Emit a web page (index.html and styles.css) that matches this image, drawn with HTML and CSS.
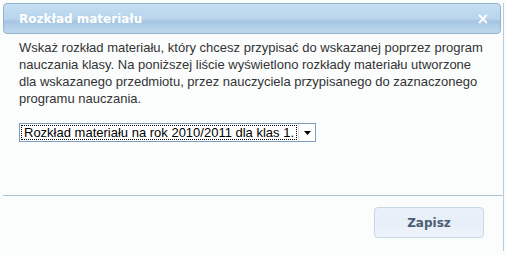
FILE: index.html
```html
<!DOCTYPE html>
<html>
<head>
<meta charset="utf-8">
<link rel="stylesheet" href="styles.css">
</head>
<body>
<div class="dialog">
  <div class="titlebar">
    <span class="title">Rozkład materiału</span>
    <span class="close">×</span>
  </div>
  <div class="content">
    <p class="desc">Wskaż rozkład materiału, który chcesz przypisać do wskazanej poprzez program nauczania klasy. Na poniższej liście wyświetlono rozkłady materiału utworzone dla wskazanego przedmiotu, przez nauczyciela przypisanego do zaznaczonego programu nauczania.</p>
    <div class="select">
      <span class="select-text">Rozkład materiału na rok 2010/2011 dla klas 1.</span>
      <span class="select-arrow"><svg width="7" height="4" viewBox="0 0 7 4"><path d="M0 0H7L3.5 4Z" fill="#000"/></svg></span>
    </div>
  </div>
  <div class="footer">
    <button class="btn">Zapisz</button>
  </div>
</div>
</body>
</html>
```

FILE: styles.css
```css
html, body {
  margin: 0;
  padding: 0;
  background: #fbfdfd;
}
.dialog {
  width: 503px;
  height: 248px;
  margin: 3px 0 0 1px;
  display: flex;
  flex-direction: column;
  border-right: 1px solid #b5cfe0;
  box-sizing: border-box;
}
.titlebar {
  height: 31px;
  margin: 0 2px 0 2px;
  border: 1px solid #93b4cc;
  border-radius: 4px;
  box-sizing: border-box;
  background: linear-gradient(#c5def2 0%, #b8d5ed 50%, #a3c4e0 62%, #afcee8 72%, #bdd8ee 100%);
  display: flex;
  align-items: center;
  justify-content: space-between;
  padding: 0 11px 0 15px;
}
.title {
  font-family: "DejaVu Sans", Verdana, sans-serif;
  font-weight: bold;
  font-size: 12px;
  color: #ffffff;
  text-shadow: 0 0 1px #a8c6de;
}
.close {
  font-family: "DejaVu Sans", sans-serif;
  font-weight: bold;
  font-size: 15px;
  color: #ffffff;
  margin-top: 1px;
}
.content {
  padding: 5px 14px 0 16px;
  height: 162px;
  border-bottom: 1px solid #a9c3d3;
  margin-left: 2px;
  box-sizing: border-box;
}
.desc {
  margin: 0;
  font-family: "Liberation Sans", Arial, sans-serif;
  font-size: 13px;
  line-height: 17px;
  color: #333333;
}
.select {
  margin-top: 16px;
  width: 297px;
  height: 19px;
  border: 1px solid #7f9db9;
  box-sizing: border-box;
  background: #fff;
  display: flex;
  align-items: stretch;
}
.select-text {
  flex: 1;
  font-family: "Liberation Sans", Arial, sans-serif;
  font-size: 13px;
  line-height: 15px;
  color: #000;
  outline: 1px dotted #000;
  outline-offset: -1px;
  padding-left: 3px;
  margin: 1px;
  white-space: nowrap;
  overflow: hidden;
}
.select-arrow {
  width: 16px;
  display: flex;
  align-items: center;
  justify-content: center;
  border-left: 1px solid #e0e0e0;
}
.footer {
  flex: 1;
  display: flex;
  justify-content: flex-end;
  align-items: flex-start;
  padding: 11px 19px 0 0;
}
.btn {
  width: 110px;
  height: 31px;
  border: 1px solid #c7d7e6;
  border-radius: 4px;
  background: linear-gradient(#eaf1fa, #e6eef8 50%, #eef4fb);
  font-family: "DejaVu Sans", Verdana, sans-serif;
  font-weight: bold;
  font-size: 12px;
  color: #4d5d73;
  padding: 0;
}
```
